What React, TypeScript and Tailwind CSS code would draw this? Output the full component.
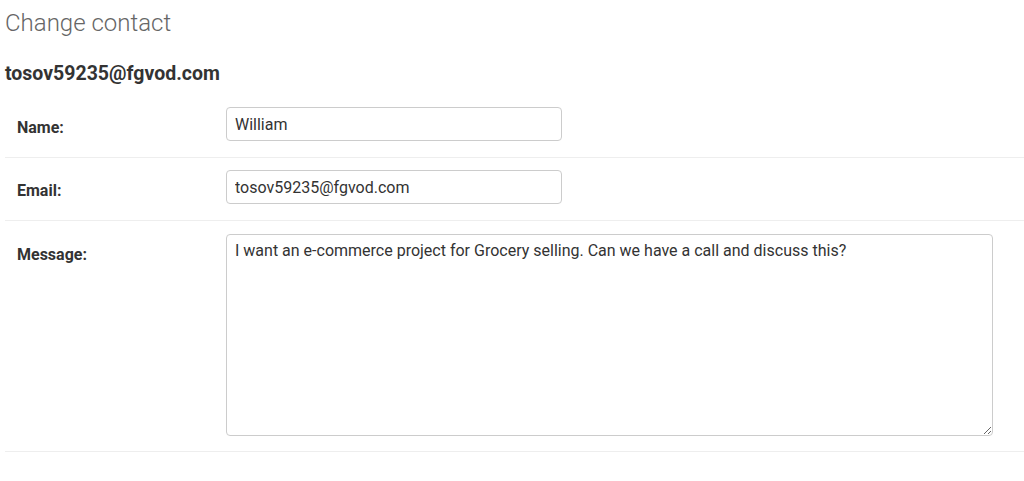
export default function App() {
  return (
    <div className="min-h-[481px] bg-white pl-[5px] font-['Roboto',sans-serif] text-[#333]">
      <h1 className="pt-[8px] text-[24px] font-light leading-[30px] text-[#666]">Change contact</h1>
      <h2 className="mt-[24px] text-[19.5px] font-bold leading-[24px] text-[#333]">tosov59235@fgvod.com</h2>
      <form className="mt-[9px]">
        <div className="flex border-b border-[#eee] pt-[12px] pb-[16px]">
          <label className="w-[221px] shrink-0 pl-[12px] pt-[12px] text-[16px] font-bold leading-[18px]">Name:</label>
          <input
            defaultValue="William"
            className="h-[34px] w-[336px] rounded-[4px] border border-[#ccc] px-[8px] text-[16px] text-[#333] outline-none"
          />
        </div>
        <div className="flex border-b border-[#eee] pt-[12px] pb-[16px]">
          <label className="w-[221px] shrink-0 pl-[12px] pt-[12px] text-[16px] font-bold leading-[18px]">Email:</label>
          <input
            defaultValue="tosov59235@fgvod.com"
            className="h-[34px] w-[336px] rounded-[4px] border border-[#ccc] px-[8px] text-[16px] text-[#333] outline-none"
          />
        </div>
        <div className="flex border-b border-[#eee] pt-[13px] pb-[15px]">
          <label className="w-[221px] shrink-0 pl-[12px] pt-[12px] text-[16px] font-bold leading-[18px]">Message:</label>
          <textarea
            defaultValue="I want an e-commerce project for Grocery selling. Can we have a call and discuss this?"
            className="h-[202px] w-[767px] rounded-[4px] border border-[#ccc] px-[8px] py-[6px] text-[16px] leading-[20px] text-[#333] outline-none"
          />
        </div>
      </form>
    </div>
  )
}
